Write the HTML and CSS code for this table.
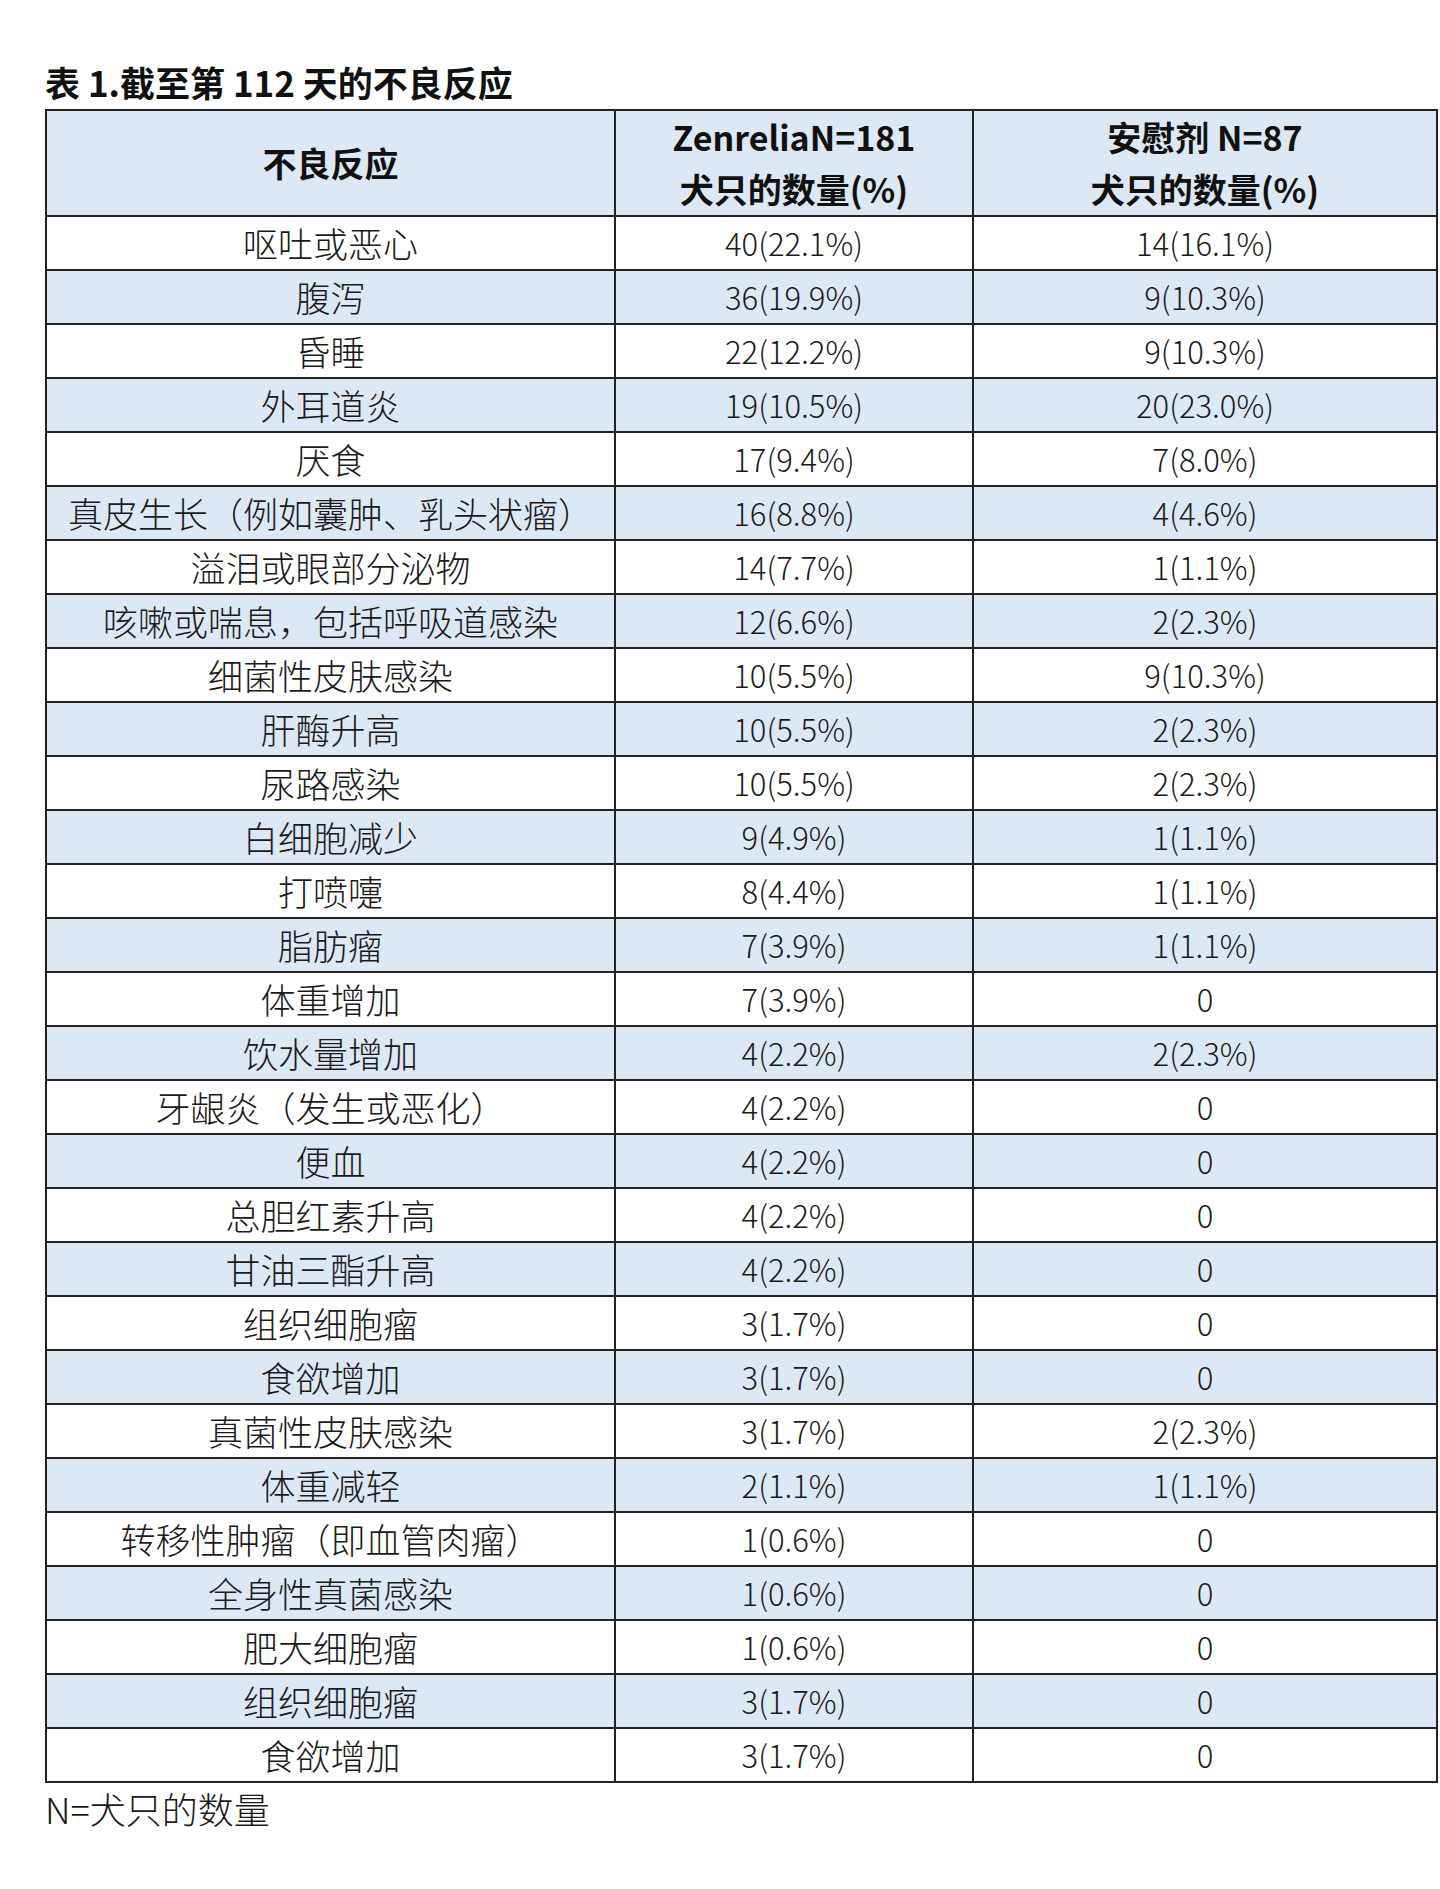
FILE: index.html
```html
<!DOCTYPE html>
<html lang="zh-CN">
<head>
<meta charset="utf-8">
<title>表 1.截至第 112 天的不良反应</title>
<link rel="stylesheet" href="styles.css">
</head>
<body>
<div class="page">
  <h1 class="title">表 1.截至第 112 天的不良反应</h1>
  <table class="ae">
    <thead>
      <tr class="head">
        <th class="c1">不良反应</th>
        <th class="c2">ZenreliaN=181<br>犬只的数量(%)</th>
        <th class="c3">安慰剂 N=87<br>犬只的数量(%)</th>
      </tr>
    </thead>
    <tbody>
      <tr class="r"><td>呕吐或恶心</td><td class="n">40(22.1%)</td><td class="n">14(16.1%)</td></tr>
      <tr class="r alt"><td>腹泻</td><td class="n">36(19.9%)</td><td class="n">9(10.3%)</td></tr>
      <tr class="r"><td>昏睡</td><td class="n">22(12.2%)</td><td class="n">9(10.3%)</td></tr>
      <tr class="r alt"><td>外耳道炎</td><td class="n">19(10.5%)</td><td class="n">20(23.0%)</td></tr>
      <tr class="r"><td>厌食</td><td class="n">17(9.4%)</td><td class="n">7(8.0%)</td></tr>
      <tr class="r alt"><td>真皮生长（例如囊肿、乳头状瘤）</td><td class="n">16(8.8%)</td><td class="n">4(4.6%)</td></tr>
      <tr class="r"><td>溢泪或眼部分泌物</td><td class="n">14(7.7%)</td><td class="n">1(1.1%)</td></tr>
      <tr class="r alt"><td>咳嗽或喘息，包括呼吸道感染</td><td class="n">12(6.6%)</td><td class="n">2(2.3%)</td></tr>
      <tr class="r"><td>细菌性皮肤感染</td><td class="n">10(5.5%)</td><td class="n">9(10.3%)</td></tr>
      <tr class="r alt"><td>肝酶升高</td><td class="n">10(5.5%)</td><td class="n">2(2.3%)</td></tr>
      <tr class="r"><td>尿路感染</td><td class="n">10(5.5%)</td><td class="n">2(2.3%)</td></tr>
      <tr class="r alt"><td>白细胞减少</td><td class="n">9(4.9%)</td><td class="n">1(1.1%)</td></tr>
      <tr class="r"><td>打喷嚏</td><td class="n">8(4.4%)</td><td class="n">1(1.1%)</td></tr>
      <tr class="r alt"><td>脂肪瘤</td><td class="n">7(3.9%)</td><td class="n">1(1.1%)</td></tr>
      <tr class="r"><td>体重增加</td><td class="n">7(3.9%)</td><td class="n">0</td></tr>
      <tr class="r alt"><td>饮水量增加</td><td class="n">4(2.2%)</td><td class="n">2(2.3%)</td></tr>
      <tr class="r"><td>牙龈炎（发生或恶化）</td><td class="n">4(2.2%)</td><td class="n">0</td></tr>
      <tr class="r alt"><td>便血</td><td class="n">4(2.2%)</td><td class="n">0</td></tr>
      <tr class="r"><td>总胆红素升高</td><td class="n">4(2.2%)</td><td class="n">0</td></tr>
      <tr class="r alt"><td>甘油三酯升高</td><td class="n">4(2.2%)</td><td class="n">0</td></tr>
      <tr class="r"><td>组织细胞瘤</td><td class="n">3(1.7%)</td><td class="n">0</td></tr>
      <tr class="r alt"><td>食欲增加</td><td class="n">3(1.7%)</td><td class="n">0</td></tr>
      <tr class="r"><td>真菌性皮肤感染</td><td class="n">3(1.7%)</td><td class="n">2(2.3%)</td></tr>
      <tr class="r alt"><td>体重减轻</td><td class="n">2(1.1%)</td><td class="n">1(1.1%)</td></tr>
      <tr class="r"><td>转移性肿瘤（即血管肉瘤）</td><td class="n">1(0.6%)</td><td class="n">0</td></tr>
      <tr class="r alt"><td>全身性真菌感染</td><td class="n">1(0.6%)</td><td class="n">0</td></tr>
      <tr class="r"><td>肥大细胞瘤</td><td class="n">1(0.6%)</td><td class="n">0</td></tr>
      <tr class="r alt"><td>组织细胞瘤</td><td class="n">3(1.7%)</td><td class="n">0</td></tr>
      <tr class="r"><td>食欲增加</td><td class="n">3(1.7%)</td><td class="n">0</td></tr>
    </tbody>
  </table>
  <p class="note">N=犬只的数量</p>
</div>
</body>
</html>
```

FILE: styles.css
```css
html, body {
  margin: 0;
  padding: 0;
  background: #ffffff;
}

body {
  font-family: "Noto Sans CJK SC", "Noto Sans", sans-serif;
  color: #1c1c1c;
}

.page {
  padding: 62px 0 0 45px;
}

.title {
  margin: 0 0 7px 0;
  font-size: 35px;
  line-height: 40px;
  font-weight: 700;
  color: #111;
}

.ae {
  width: 1393px;
  table-layout: fixed;
  border-spacing: 0;
  border-top: 2px solid #222;
  border-left: 2px solid #222;
}

.ae th,
.ae td {
  box-sizing: border-box;
  padding: 0;
  border-right: 2px solid #222;
  border-bottom: 2px solid #222;
  text-align: center;
  vertical-align: middle;
  white-space: nowrap;
}

.ae th {
  background: #dde8f5;
  font-size: 34px;
  font-weight: 700;
  line-height: 52px;
  color: #111;
}

.ae .c1 { width: 569px; }
.ae .c2 { width: 358px; }
.ae .c3 { width: 464px; }

.head {
  height: 106px;
}

.r {
  height: 54px;
}

.ae td {
  font-size: 35px;
  line-height: 40px;
  font-weight: 300;
  color: #1a1a1a;
}

.ae td.n {
  font-size: 31px;
}

.alt td {
  background: #dde8f5;
}

.note {
  margin: 0;
  font-size: 36px;
  line-height: 50px;
  font-weight: 300;
  color: #1a1a1a;
}
```
